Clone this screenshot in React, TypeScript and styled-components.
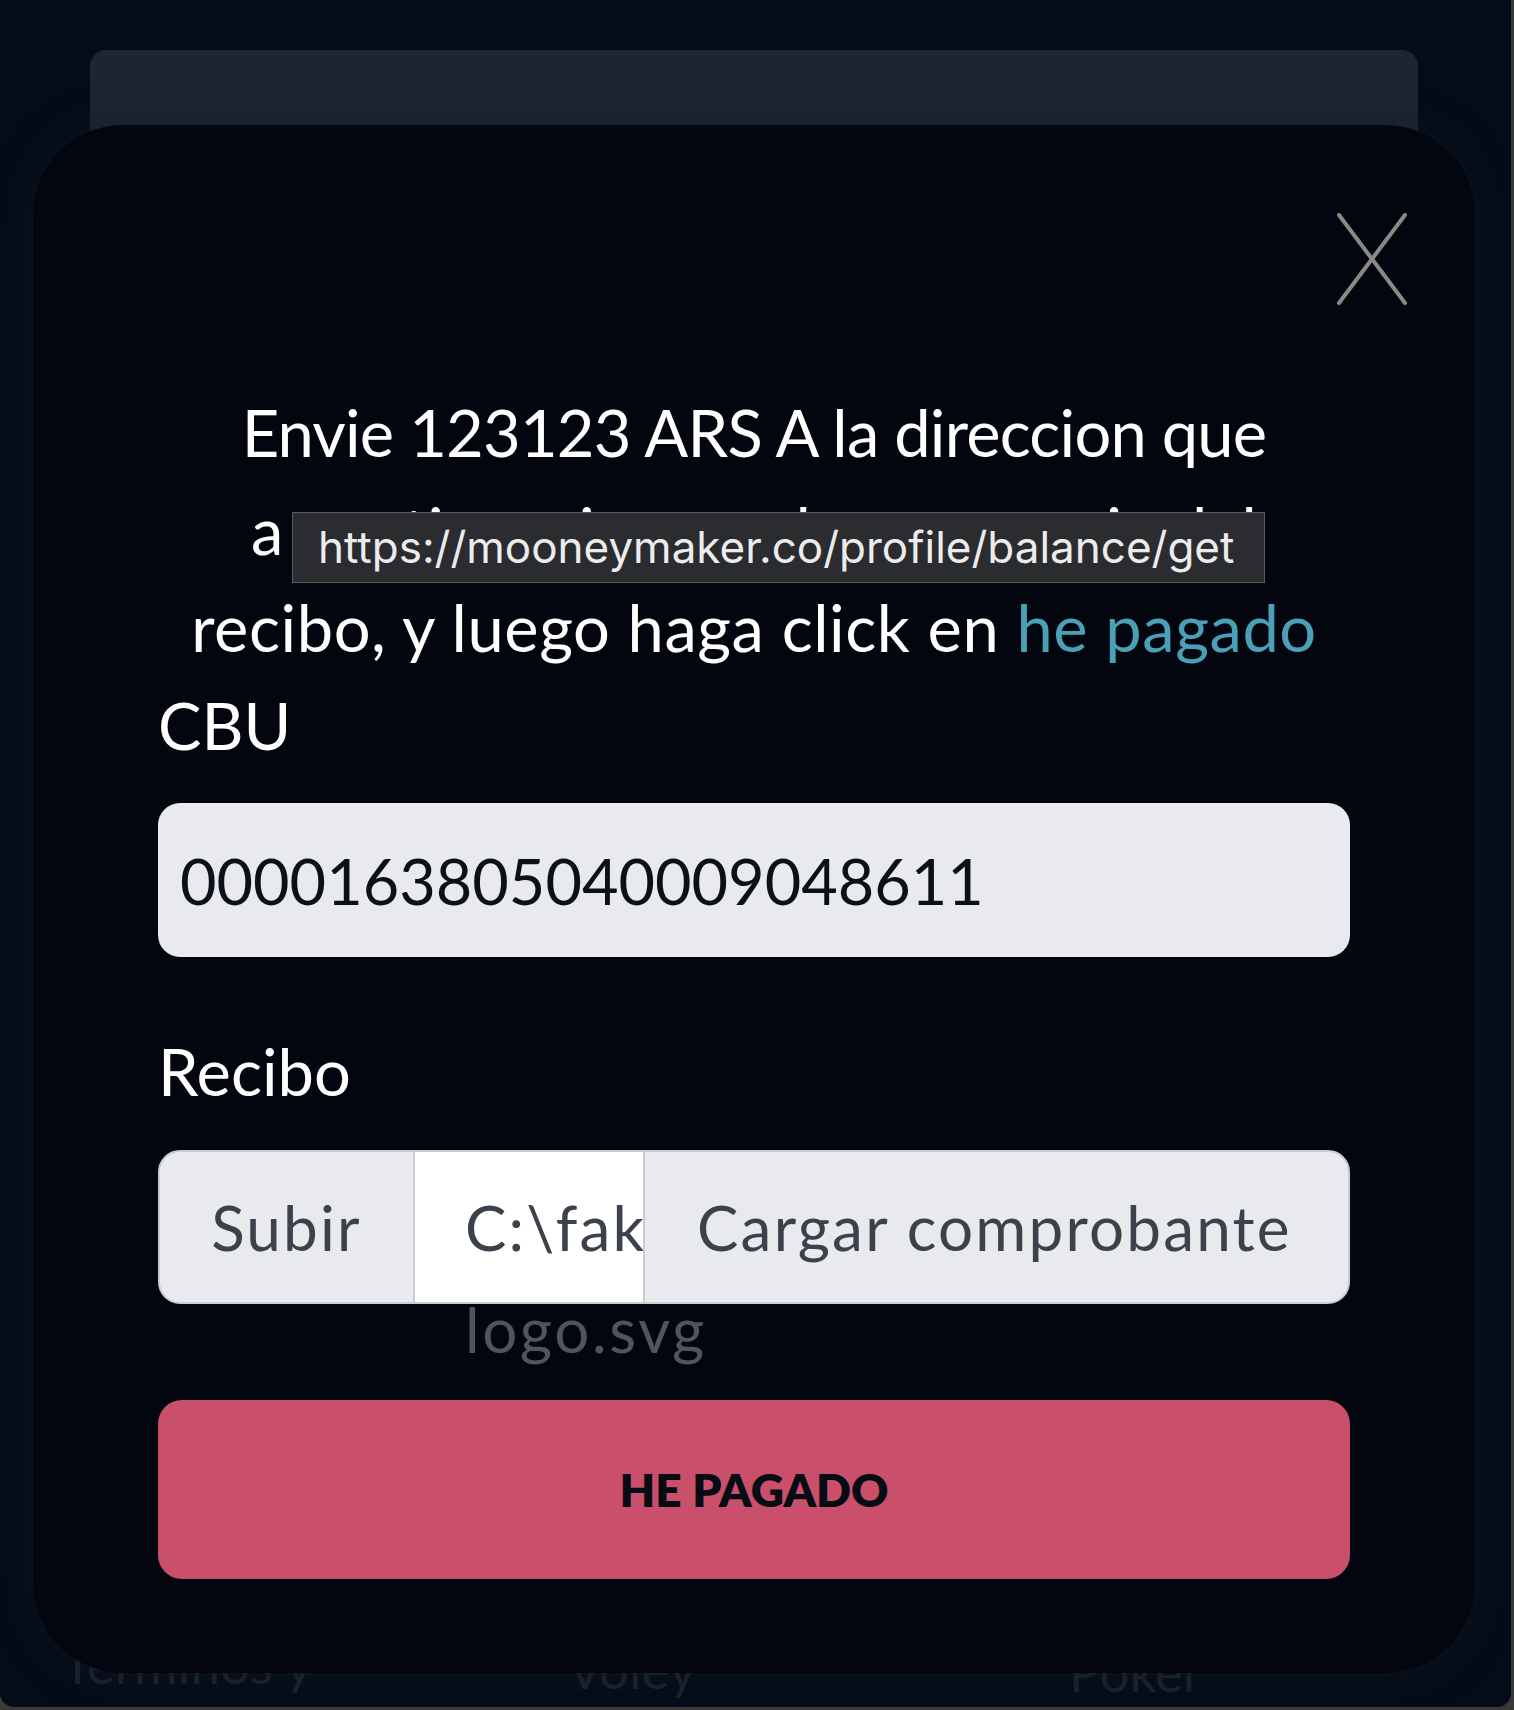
import React from "react";
import styled, { createGlobalStyle } from "styled-components";

const Global = createGlobalStyle`
  html, body { margin: 0; padding: 0; background: #3a3b36; }
  body { font-family: Lato, "Noto Sans", sans-serif; }
  * { box-sizing: border-box; }
`;

const Frame = styled.div`
  position: relative;
  width: 1511px;
  height: 1707px;
  background: #060c17;
  border-bottom-left-radius: 14px;
  border-bottom-right-radius: 14px;
  overflow: hidden;
  padding-top: 50px;
  display: flex;
  flex-direction: column;
`;

const BackCard = styled.div`
  margin: 0 93px 0 90px;
  height: 1560px;
  background: #1f2530;
  border-radius: 16px;
`;

const Footer = styled.div`
  margin-top: 22px;
  padding-left: 62px;
  display: grid;
  grid-template-columns: 505px 502px 1fr;
`;

const FooterLink = styled.span<{ $offset?: number }>`
  font-family: Lato, sans-serif;
  font-size: 53px;
  line-height: 64px;
  color: #1c232d;
  padding-top: ${(p) => p.$offset ?? 0}px;
`;

const Modal = styled.div`
  position: absolute;
  left: 33px;
  top: 125px;
  width: 1442px;
  height: 1548px;
  background: #03060f;
  border-radius: 90px;
  padding: 88px 125px 0;
  box-shadow: 0 0 36px rgba(14, 28, 44, 0.55);
  display: flex;
  flex-direction: column;
`;

const CloseRow = styled.div`
  display: flex;
  justify-content: flex-end;
  margin-right: -57px;
  height: 92px;
`;

const CloseButton = styled.button`
  width: 70px;
  height: 92px;
  padding: 0;
  border: none;
  background: none;
  cursor: pointer;
  display: block;
`;

const Heading = styled.div`
  position: relative;
  margin-top: 79px;
  text-align: center;
  font-family: Lato, sans-serif;
  font-size: 65px;
  line-height: 97.5px;
  color: #ffffff;
`;

const Line = styled.span<{ $tracking?: number }>`
  display: block;
  white-space: nowrap;
  letter-spacing: ${(p) => p.$tracking ?? 0}px;
`;

const Accent = styled.span`
  color: #4aa1b7;
`;

const Tooltip = styled.div`
  position: absolute;
  top: 128px;
  left: 134px;
  width: 973px;
  height: 71px;
  background: #2b2c2f;
  border: 1px solid #5a5b5e;
  font-family: Inter, "Noto Sans", sans-serif;
  font-size: 44px;
  line-height: 69px;
  letter-spacing: 0;
  color: #ececec;
  padding-left: 25px;
  text-align: left;
  white-space: nowrap;
`;

const Label = styled.div`
  font-family: Lato, sans-serif;
  font-size: 65px;
  line-height: 97.5px;
  color: #ffffff;
  margin-bottom: 29px;
`;

const TextInput = styled.input`
  width: 100%;
  height: 154px;
  background: #e9eaee;
  border: none;
  border-radius: 22px;
  padding: 0 22px;
  font-family: Lato, sans-serif;
  font-size: 63px;
  color: #0c1019;
  outline: none;
  margin-bottom: 66px;
`;

const FileBox = styled.div`
  display: flex;
  height: 154px;
  background: #e9eaee;
  border: 2px solid #c9ccd3;
  border-radius: 22px;
  font-family: Lato, sans-serif;
  font-size: 62px;
  letter-spacing: 2.2px;
  color: #3c424c;
`;

const FileButton = styled.div`
  width: 253px;
  display: flex;
  align-items: center;
  justify-content: center;
`;

const FileName = styled.div`
  width: 232px;
  background: #ffffff;
  border-left: 2px solid #c9ccd3;
  border-right: 2px solid #c9ccd3;
  padding-left: 50px;
  overflow: hidden;
  white-space: nowrap;
  display: flex;
  align-items: center;
`;

const FilePlaceholder = styled.div`
  flex: 1;
  display: flex;
  align-items: center;
  padding-left: 52px;
  white-space: nowrap;
`;

const FileHint = styled.div`
  height: 96px;
  line-height: 50px;
  padding-left: 307px;
  font-family: Lato, sans-serif;
  font-size: 62px;
  letter-spacing: 2.6px;
  color: #50555d;
`;

const PayButton = styled.button`
  width: 100%;
  height: 179px;
  background: #c94f6a;
  border: none;
  border-radius: 24px;
  font-family: Lato, sans-serif;
  font-weight: 800;
  font-size: 46px;
  color: #070b14;
  cursor: pointer;
`;

export default function App() {
  return (
    <>
      <Global />
      <Frame>
        <BackCard />
        <Footer>
          <FooterLink>Terminos y</FooterLink>
          <FooterLink $offset={5}>Voley</FooterLink>
          <FooterLink $offset={8}>Poker</FooterLink>
        </Footer>
        <Modal>
          <CloseRow>
            <CloseButton aria-label="Cerrar">
              <svg width="70" height="92" viewBox="0 0 70 92">
                <line x1="2" y1="2" x2="68" y2="90" stroke="#8a8a84" strokeWidth="4" strokeLinecap="round" />
                <line x1="68" y1="2" x2="2" y2="90" stroke="#8a8a84" strokeWidth="4" strokeLinecap="round" />
              </svg>
            </CloseButton>
          </CloseRow>
          <Heading>
            <Line $tracking={-0.8}>Envie 123123 ARS A la direccion que</Line>
            <Line>a continuacion y suba una copia del</Line>
            <Line $tracking={0.55}>
              recibo, y luego haga click en <Accent>he pagado</Accent>
            </Line>
            <Tooltip>https://mooneymaker.co/profile/balance/get</Tooltip>
          </Heading>
          <Label>CBU</Label>
          <TextInput readOnly defaultValue="0000163805040009048611" />
          <Label>Recibo</Label>
          <FileBox>
            <FileButton>Subir</FileButton>
            <FileName>C:\fakepath\</FileName>
            <FilePlaceholder>Cargar comprobante</FilePlaceholder>
          </FileBox>
          <FileHint>logo.svg</FileHint>
          <PayButton>HE PAGADO</PayButton>
        </Modal>
      </Frame>
    </>
  );
}
